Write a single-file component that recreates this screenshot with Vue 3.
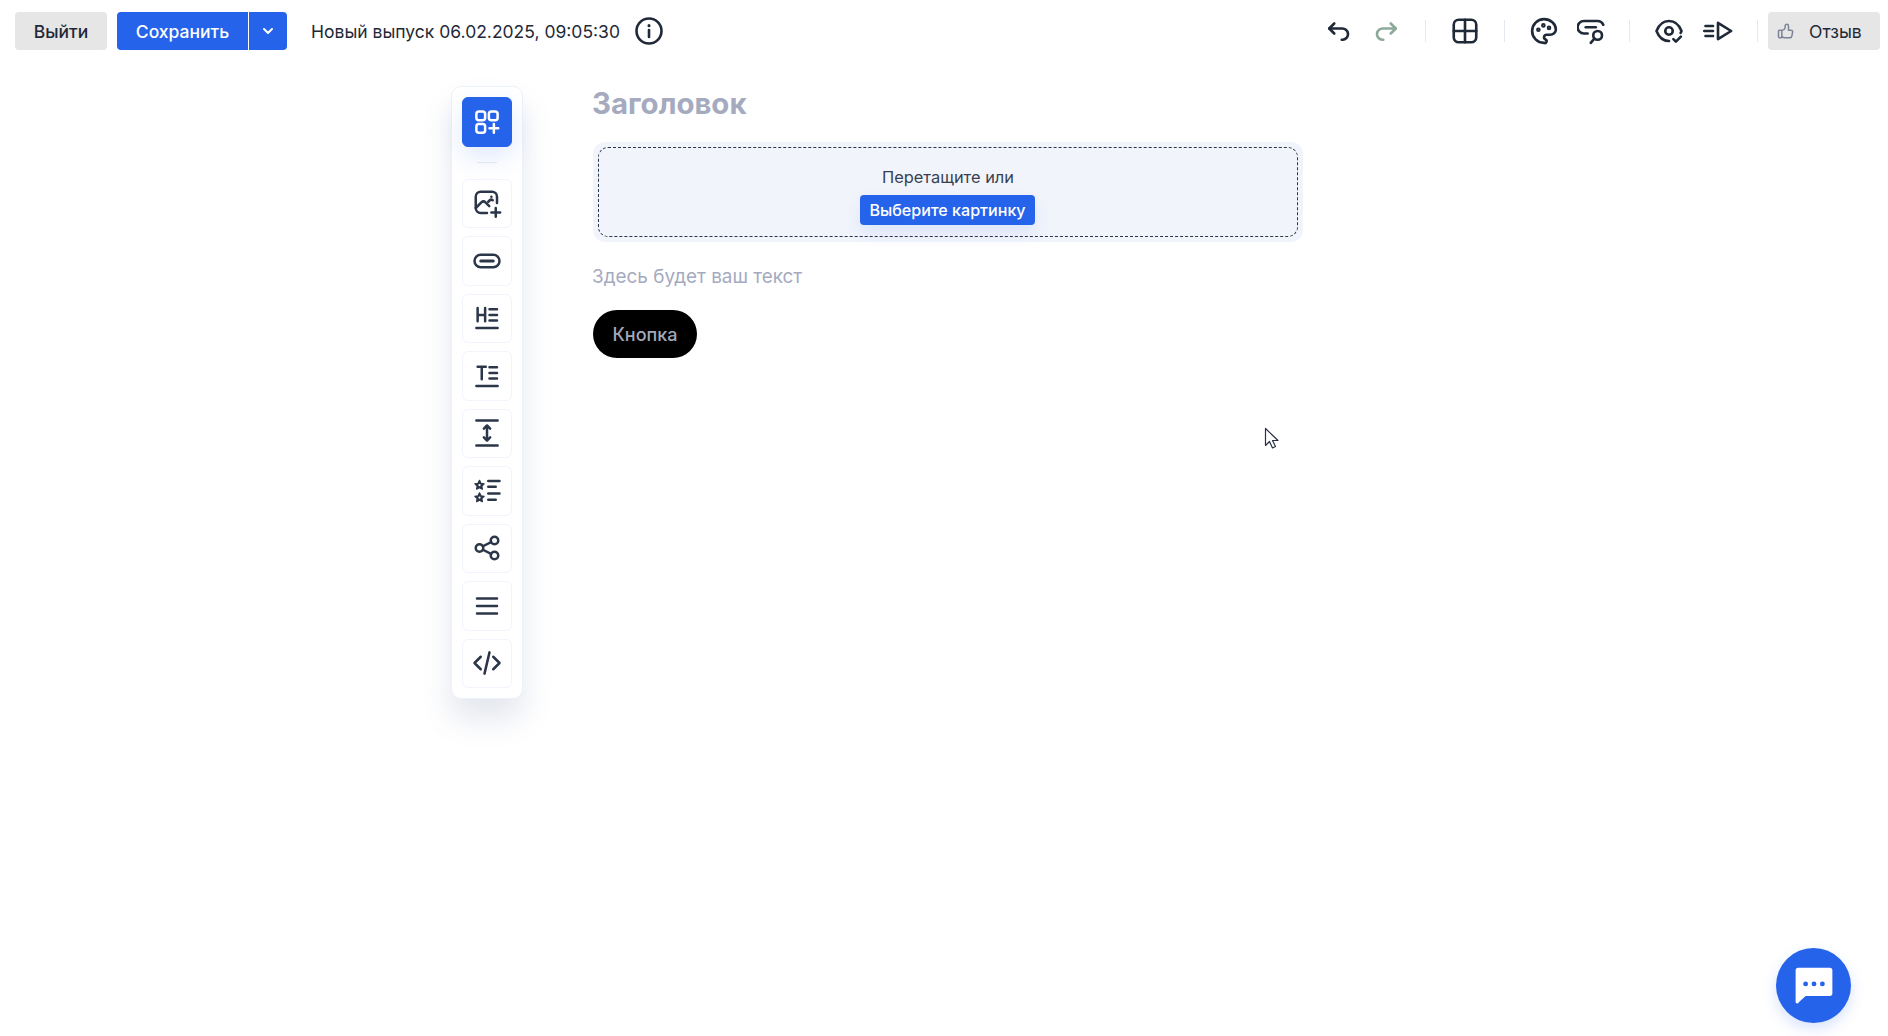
<script setup>
const tools = ['image', 'pill', 'heading', 'text', 'spacing', 'list', 'share', 'menu', 'code']
</script>

<template>
  <div class="page">
    <header class="topbar">
      <div class="left">
        <button class="btn grey exit">Выйти</button>
        <div class="split">
          <button class="btn blue save">Сохранить</button>
          <button class="btn blue caret" aria-label="Ещё">
            <svg width="16" height="16" viewBox="0 0 24 24" fill="none" stroke="#fff" stroke-width="3" stroke-linecap="round" stroke-linejoin="round"><path d="M6 9l6 6l6 -6" /></svg>
          </button>
        </div>
        <span class="release">Новый выпуск 06.02.2025, 09:05:30</span>
        <svg class="info" width="30" height="30" viewBox="0 0 30 30" fill="none" stroke="#1f2937" stroke-width="2.6" stroke-linecap="round">
          <circle cx="15" cy="15" r="12.5" />
          <path d="M15 14v7" />
          <path d="M15 9.5v.2" stroke-width="3" />
        </svg>
      </div>
      <div class="right">
        <div class="group g1">
          <svg class="ic" viewBox="0 0 24 24"><path d="M9 14l-4 -4l4 -4" /><path d="M5 10h10a4.5 4.5 0 0 1 1 9h-1" /></svg>
          <svg class="ic redo" viewBox="0 0 24 24"><path d="M15 14l4 -4l-4 -4" /><path d="M19 10h-10a4.5 4.5 0 0 0 -1 9h1" /></svg>
        </div>
        <i class="sep s1"></i>
        <div class="group">
          <svg class="ic" viewBox="0 0 24 24"><rect x="3" y="3" width="18" height="18" rx="4" /><path d="M12 3v18M3 12h18" /></svg>
        </div>
        <i class="sep s2"></i>
        <div class="group g2">
          <svg class="ic" viewBox="0 0 24 24"><path d="M12 21.5a9.5 9.5 0 0 1 0 -19c5.2 0 9.5 3.8 9.5 8.3c0 1.1 -.5 2.2 -1.4 3c-.9 .8 -2.1 1.2 -3.3 1.2h-2.6a2 2 0 0 0 -1 3.8a1.4 1.4 0 0 1 -1.2 2.7" /><circle cx="7.5" cy="11" r=".8" /><circle cx="11.5" cy="7.5" r=".8" /><circle cx="16" cy="9.5" r=".8" /></svg>
          <svg class="ic" viewBox="0 0 24 24"><path d="M8.500 14h-3a5 5 0 0 1 0 -10h11a5 5 0 0 1 4.500 3" /><path d="M7 9h8" /><circle cx="16.500" cy="15.500" r="3.500" /><path d="M14 18l-3 3.500" /></svg>
        </div>
        <i class="sep s3"></i>
        <div class="group g3">
          <svg class="ic" viewBox="0 0 24 24"><circle cx="12" cy="12" r="3" /><path d="M12 20c-4.500 0 -8 -2.800 -10 -8c2 -5.200 5.500 -8 10 -8s8 2.800 10 8c-.2 .5 -.4 1 -.7 1.500" /><path d="M15.500 18.500l2 2l4 -4" /></svg>
          <svg class="ic" viewBox="0 0 24 24"><path d="M12 5.500l10.500 6.500l-10.500 6.500z" /><path d="M2 8h6M1 12h7M2 16h6" /></svg>
        </div>
        <i class="sep"></i>
        <button class="btn grey feedback">
          <svg width="20" height="20" viewBox="0 0 24 24" fill="none" stroke="#7b8496" stroke-width="1.800" stroke-linecap="round" stroke-linejoin="round"><path d="M7 11v8a1 1 0 0 1 -1 1h-2a1 1 0 0 1 -1 -1v-7a1 1 0 0 1 1 -1h3a4 4 0 0 0 4 -4v-1a2 2 0 0 1 4 0v5h3a2 2 0 0 1 2 2l-1 5a2 3 0 0 1 -2 2h-7a3 3 0 0 1 -3 -3" /></svg>
          <span>Отзыв</span>
        </button>
      </div>
    </header>

    <main class="main">
      <aside class="rail">
        <button class="tool active" aria-label="Блоки">
          <svg class="ti white" viewBox="0 0 24 24"><rect x="3.500" y="3.500" width="7" height="7" rx="2" /><rect x="13.500" y="3.500" width="7" height="7" rx="2" /><rect x="3.500" y="13.500" width="7" height="7" rx="2" /><path d="M14 17h7M17.500 13.500v7" /></svg>
        </button>
        <i class="rail-sep"></i>
        <button v-for="t in tools" :key="t" class="tool" :aria-label="t">
          <svg class="ti" viewBox="0 0 24 24">
            <template v-if="t === 'image'">
              <path d="M12 20h-5a4 4 0 0 1 -4 -4v-9a4 4 0 0 1 4 -4h9a4 4 0 0 1 4 4v5" />
              <path d="M3 16l4.500 -4.500c1 -1 2.300 -1 3.300 0l3 3" />
              <path d="M13 11l1 -1c.8 -.8 1.800 -.9 2.600 -.3" />
              <path d="M15.500 7h.01" />
              <path d="M15.500 19.500h7M19 16v7" />
            </template>
            <template v-else-if="t === 'pill'">
              <rect x="2" y="7" width="20" height="10" rx="5" />
              <path d="M7 12h10" stroke-width="2.400" />
            </template>
            <template v-else-if="t === 'heading'">
              <path d="M4.500 4v10.500M10.500 4v10.500M4.500 9.500h6" />
              <path d="M14 5h6M14 9.500h6M14 14h6" />
              <path d="M3.500 20h17" />
            </template>
            <template v-else-if="t === 'text'">
              <path d="M4.500 4.500h6.500M7.800 4.500v10" />
              <path d="M14 5h6M14 9.500h6M14 14h6" />
              <path d="M3.500 20h17" />
            </template>
            <template v-else-if="t === 'spacing'">
              <path d="M3.500 2h17M3.500 22h17" />
              <path d="M12 7v10" />
              <path d="M9.500 8.500l2.500 -2.500l2.500 2.500M9.500 15.500l2.500 2.500l2.500 -2.500" />
            </template>
            <template v-else-if="t === 'list'">
              <path class="solid" d="M6 3.500l1.200 2.300l2.500 .4l-1.800 1.800l.4 2.500l-2.300 -1.200l-2.300 1.200l.4 -2.500l-1.800 -1.800l2.500 -.4z" />
              <circle class="hole" cx="6" cy="7.200" r=".9" />
              <path class="solid" d="M6 13.500l1.200 2.300l2.500 .4l-1.800 1.800l.4 2.500l-2.300 -1.200l-2.300 1.200l.4 -2.500l-1.800 -1.800l2.500 -.4z" />
              <circle class="hole" cx="6" cy="17.200" r=".9" />
              <path d="M13 4h9M13 8.500h6M13 14h9M13 19h6" />
            </template>
            <template v-else-if="t === 'share'">
              <circle cx="6" cy="12" r="3" />
              <circle cx="18" cy="6" r="3" />
              <circle cx="18" cy="18" r="3" />
              <path d="M8.700 10.600l6.600 -3.300M8.700 13.400l6.600 3.300" />
            </template>
            <template v-else-if="t === 'menu'">
              <path d="M4 6h16M4 12h16M4 18h16" />
            </template>
            <template v-else>
              <path d="M7 7l-5 5l5 5M17 7l5 5l-5 5M14 3.500l-4 17" />
            </template>
          </svg>
        </button>
      </aside>

      <section class="canvas">
        <h1 class="title">Заголовок</h1>
        <div class="drop-wrap">
          <div class="drop">
            <div class="drop-text">Перетащите или</div>
            <button class="pick">Выберите картинку</button>
          </div>
        </div>
        <p class="body-text">Здесь будет ваш текст</p>
        <button class="cta">Кнопка</button>
      </section>
    </main>

    <svg class="cursor" width="16" height="24" viewBox="0 0 16 24">
      <path d="M1.500 1.500v17l4 -4l3 6.500l3 -1.500l-3 -6l5.500 0z" fill="#fff" stroke="#2a3145" stroke-width="1.200" stroke-linejoin="round" />
    </svg>

    <button class="fab" aria-label="Чат">
      <svg width="42" height="42" viewBox="0 0 40 40"><path d="M5 3h30a2.500 2.500 0 0 1 2.500 2.500v22a2.500 2.500 0 0 1 -2.500 2.500h-23l-6.500 6a1.500 1.500 0 0 1 -3 -1v-29.500a2.500 2.500 0 0 1 2.500 -2.500z" fill="#fff" transform="translate(0 -.5)" /><circle cx="12" cy="18" r="2.300" fill="#2563eb" /><circle cx="20" cy="18" r="2.300" fill="#2563eb" /><circle cx="28" cy="18" r="2.300" fill="#2563eb" /></svg>
    </button>
  </div>
</template>

<style scoped>
.page {
  position: relative;
  width: 1888px;
  height: 1036px;
  overflow: hidden;
  background: #fff;
  font-family: Inter, "Liberation Sans", sans-serif;
  color: #1f2937;
}
button { font-family: inherit; border: 0; cursor: pointer; }
.topbar {
  display: flex;
  justify-content: space-between;
  align-items: center;
  height: 38px;
  padding: 12px 8px 0 15px;
}
.left, .right, .group { display: flex; align-items: center; }
.btn {
  height: 38px;
  border-radius: 4px;
  font-size: 17.500px;
  font-weight: 500;
  display: flex;
  align-items: center;
  justify-content: center;
}
.grey { background: #e6e6e6; color: #1f2937; }
.blue { background: #2563eb; color: #fff; }
.exit { width: 92px; }
.split { display: flex; margin-left: 10px; }
.save { width: 131px; border-radius: 4px 0 0 4px; padding: 0; }
.caret { width: 39px; border-radius: 0 4px 4px 0; border-left: 1px solid #fff; padding: 0; }
.release { margin-left: 24px; font-size: 17.500px; color: #1f2937; white-space: nowrap; }
.info { margin-left: 14px; }
.ic {
  width: 30px;
  height: 30px;
  fill: none;
  stroke: #1f2937;
  stroke-width: 2.100;
  stroke-linecap: round;
  stroke-linejoin: round;
}
.redo { stroke: #8caa9a; }
.g1 { gap: 18.500px; }
.g2 { gap: 18px; }
.g3 { gap: 19px; }
.sep { width: 1px; height: 22px; background: #e3e8f2; margin: 0 24px; display: block; }
.s1 { margin: 0 24px 0 23.500px; }
.s2 { margin: 0 24px 0 24px; }
.s3 { margin: 0 24px 0 22px; }
.right .sep:last-of-type { margin-right: 10px; }
.feedback { width: 112px; gap: 13px; font-weight: 400; justify-content: flex-start; padding: 0 0 0 8px; }
.main { display: flex; align-items: flex-start; padding: 36px 0 0 451px; gap: 69px; }
.rail {
  width: 72px;
  box-sizing: border-box;
  display: flex;
  flex-direction: column;
  align-items: center;
  padding: 10px 0 10px;
  background: #fff;
  border: 1px solid #edf1f9;
  border-radius: 10px;
  box-shadow: 0 20px 30px rgba(90, 105, 150, .16);
}
.tool {
  width: 50px;
  height: 49.500px;
  margin-top: 8px;
  padding: 0;
  display: flex;
  align-items: center;
  justify-content: center;
  background: #fff;
  border: 1px solid #f1f4fb;
  border-radius: 6px;
}
.tool.active {
  margin-top: 0;
  height: 50px;
  background: #2563eb;
  border-color: #2563eb;
  box-shadow: 0 10px 24px rgba(37, 99, 235, .14);
}
.rail-sep { display: block; width: 20px; height: 1px; background: #dfe6ee; margin: 15px 0 7.500px; }
.ti {
  width: 30px;
  height: 30px;
  fill: none;
  stroke: #2b3648;
  stroke-width: 2;
  stroke-linecap: round;
  stroke-linejoin: round;
}
.ti .solid { fill: #2b3648; stroke-width: 1; }
.ti .hole { fill: #fff; stroke: none; }
.ti.white { stroke: #fff; }
.canvas { width: 711px; }
.title { margin: -2px 0 0; font-size: 29.400px; line-height: 40px; font-weight: 700; color: #a5aabf; }
.drop-wrap {
  margin: 18px 0 0 1px;
  padding: 5px;
  height: 100px;
  box-sizing: border-box;
  background: #f1f4fb;
  border-radius: 12px;
}
.drop {
  height: 90px;
  box-sizing: border-box;
  border: 1px dashed #2b3648;
  border-radius: 10px;
  display: flex;
  flex-direction: column;
  align-items: center;
  padding-top: 17px;
}
.drop-text { font-size: 16.400px; line-height: 24px; color: #374151; }
.pick {
  margin: 6px 0 0 -1px;
  height: 30px;
  width: 175px;
  padding: 0;
  background: #2563eb;
  color: #fff;
  font-size: 16.100px;
  font-weight: 500;
  border-radius: 4px;
  box-shadow: 0 8px 16px rgba(37, 99, 235, .1);
}
.body-text { margin: 21px 0 0; font-size: 18.900px; line-height: 28px; color: #a5aabf; }
.cta {
  display: block;
  margin: 19px 0 0 1px;
  width: 104px;
  height: 48px;
  padding: 0;
  background: #000;
  color: #a3a8bc;
  font-size: 18px;
  font-weight: 500;
  border-radius: 24px;
}
.cursor { position: absolute; left: 1264px; top: 427px; }
.fab {
  position: absolute;
  left: 1776px;
  top: 948px;
  width: 75px;
  height: 75px;
  padding: 0;
  border-radius: 50%;
  background: #2563eb;
  display: flex;
  align-items: center;
  justify-content: center;
  box-shadow: 0 6px 14px rgba(37, 99, 235, .18);
}
</style>

<style>
html, body { margin: 0; background: #fff; }
</style>
